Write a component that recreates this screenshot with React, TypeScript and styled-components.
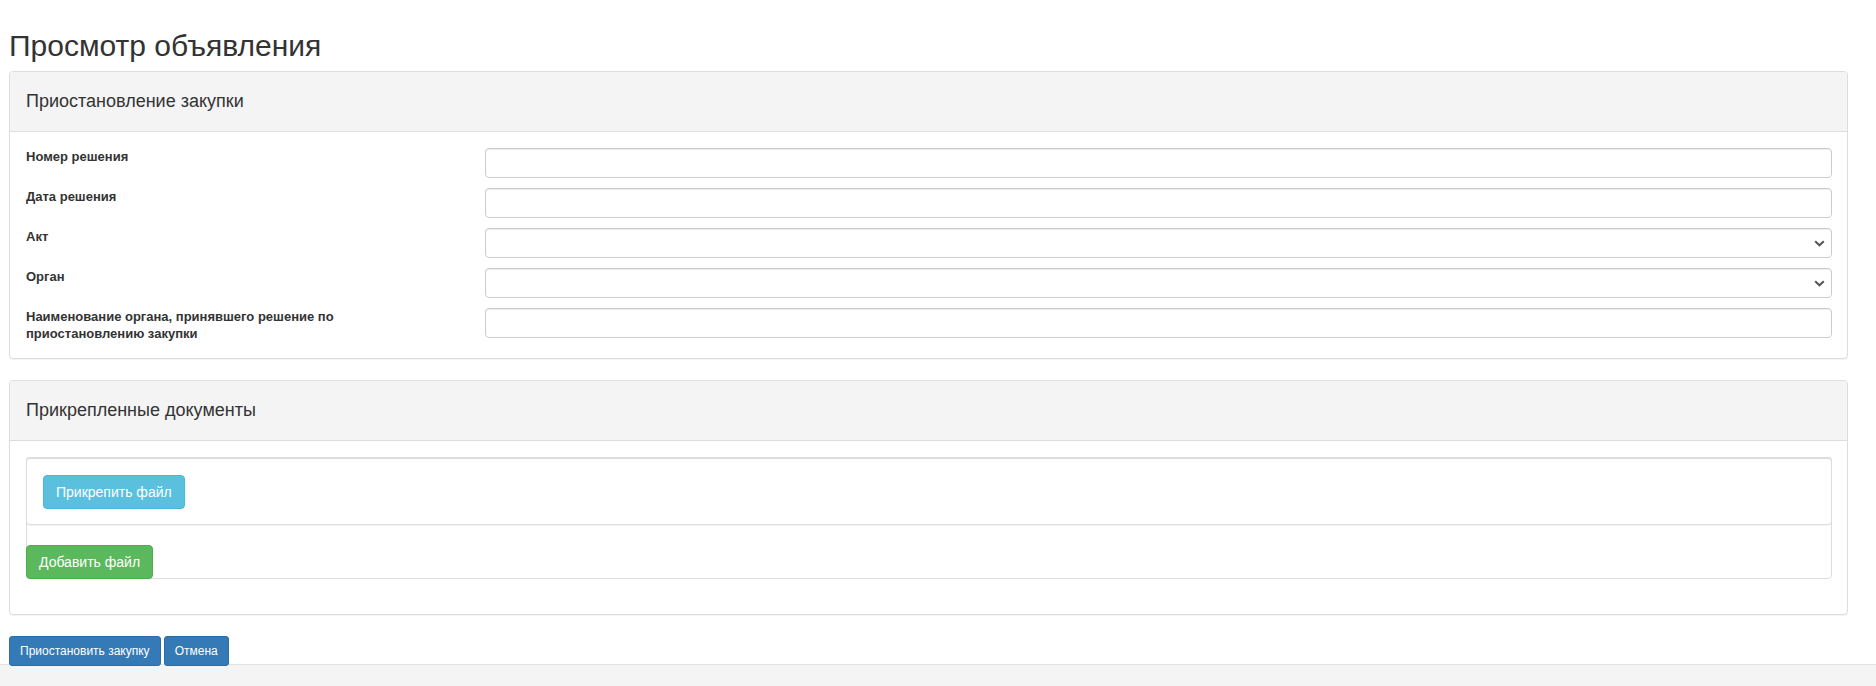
import React from "react";
import styled, { createGlobalStyle } from "styled-components";

const GlobalStyle = createGlobalStyle`
  html, body {
    margin: 0;
    padding: 0;
    background: #fff;
  }
  body {
    font-family: "Liberation Sans", Arial, sans-serif;
    font-size: 14px;
    color: #333;
  }
  * {
    box-sizing: border-box;
  }
`;

const Page = styled.div`
  display: flex;
  flex-direction: column;
  min-height: 100vh;
`;

const Content = styled.div`
  padding: 0 28px 0 9px;
`;

const Title = styled.h3`
  margin: 0 0 9px 0;
  padding-top: 29px;
  font-size: 30px;
  font-weight: 400;
  line-height: 33px;
  color: #333;
`;

const Panel = styled.section`
  border: 1px solid #ddd;
  border-radius: 4px;
  background: #fff;
  margin-bottom: 21px;
  box-shadow: 0 1px 1px rgba(0, 0, 0, 0.05);
`;

const PanelHeading = styled.div`
  display: flex;
  align-items: center;
  height: 60px;
  padding: 0 16px;
  background: #f4f4f4;
  border-bottom: 1px solid #ddd;
  border-radius: 3px 3px 0 0;
  font-size: 18px;
  color: #333;
`;

const PanelBody = styled.div<{ $bottom?: number }>`
  padding: 16px 15px ${props => props.$bottom ?? 16}px 16px;
`;

const Form = styled.div`
  display: grid;
  grid-template-columns: 429px 1fr;
  column-gap: 30px;
  row-gap: 10px;
`;

const Label = styled.label`
  max-width: 340px;
  font-size: 13px;
  font-weight: 700;
  line-height: 17px;
  color: #333;
`;

const Input = styled.input`
  display: block;
  width: 100%;
  height: 30px;
  padding: 4px 10px;
  border: 1px solid #ccc;
  border-radius: 4px;
  background: #fff;
  font-family: inherit;
  font-size: 12px;
  box-shadow: inset 0 1px 1px rgba(0, 0, 0, 0.075);
  outline: none;
`;

const SelectWrap = styled.div`
  position: relative;
`;

const Select = styled.select`
  display: block;
  width: 100%;
  height: 30px;
  padding: 4px 10px;
  border: 1px solid #ccc;
  border-radius: 4px;
  background: #fff;
  font-family: inherit;
  font-size: 12px;
  appearance: none;
  box-shadow: inset 0 1px 1px rgba(0, 0, 0, 0.075);
  outline: none;
`;

const Chevron = styled.svg`
  position: absolute;
  right: 7px;
  top: 12px;
  pointer-events: none;
`;

const FilesBox = styled.div`
  border: 1px solid #ddd;
  border-radius: 4px;
  margin-bottom: 20px;
`;

const Well = styled.div`
  margin: -1px -1px 0 -1px;
  padding: 16px 15px 15px 16px;
  border: 1px solid #ddd;
  border-top: 2px solid #ddd;
  border-radius: 4px;
  box-shadow: 0 1px 1px rgba(0, 0, 0, 0.05);
`;

const FileRow = styled.div`
  margin: 20px 0 -1px -1px;
`;

const Button = styled.button<{ $bg: string; $border: string; $small?: boolean }>`
  display: inline-block;
  padding: ${props => (props.$small ? "5px 10px" : "6px 12px")};
  font-family: inherit;
  font-size: ${props => (props.$small ? "12px" : "14px")};
  line-height: ${props => (props.$small ? "18px" : "20px")};
  color: #fff;
  background: ${props => props.$bg};
  border: 1px solid ${props => props.$border};
  border-radius: ${props => (props.$small ? "3px" : "4px")};
  cursor: pointer;
  white-space: nowrap;
`;

const Actions = styled.div`
  position: relative;
  z-index: 1;
  display: flex;
  gap: 3px;
  margin-bottom: -2px;
`;

const Footer = styled.footer`
  flex: 1;
  min-height: 30px;
  background: #f4f4f4;
  border-top: 1px solid #e3e3e3;
`;

const SelectField = () => (
  <SelectWrap>
    <Select defaultValue="">
      <option value=""></option>
    </Select>
    <Chevron width="11" height="7" viewBox="0 0 11 7">
      <path d="M1.2 1.2 L5.5 5.3 L9.8 1.2" fill="none" stroke="#555" strokeWidth="2" />
    </Chevron>
  </SelectWrap>
);

export default function App() {
  return (
    <>
      <GlobalStyle />
      <Page>
        <Content>
          <Title>Просмотр объявления</Title>

          <Panel>
            <PanelHeading>Приостановление закупки</PanelHeading>
            <PanelBody>
              <Form>
                <Label>Номер решения</Label>
                <Input type="text" />
                <Label>Дата решения</Label>
                <Input type="text" />
                <Label>Акт</Label>
                <SelectField />
                <Label>Орган</Label>
                <SelectField />
                <Label>Наименование органа, принявшего решение по приостановлению закупки</Label>
                <Input type="text" />
              </Form>
            </PanelBody>
          </Panel>

          <Panel>
            <PanelHeading>Прикрепленные документы</PanelHeading>
            <PanelBody $bottom={15}>
              <FilesBox>
                <Well>
                  <Button $bg="#5bc0de" $border="#46b8da">Прикрепить файл</Button>
                </Well>
                <FileRow>
                  <Button $bg="#5cb85c" $border="#4cae4c">Добавить файл</Button>
                </FileRow>
              </FilesBox>
            </PanelBody>
          </Panel>

          <Actions>
            <Button $small $bg="#337ab7" $border="#2e6da4">Приостановить закупку</Button>
            <Button $small $bg="#337ab7" $border="#2e6da4">Отмена</Button>
          </Actions>
        </Content>
        <Footer />
      </Page>
    </>
  );
}
